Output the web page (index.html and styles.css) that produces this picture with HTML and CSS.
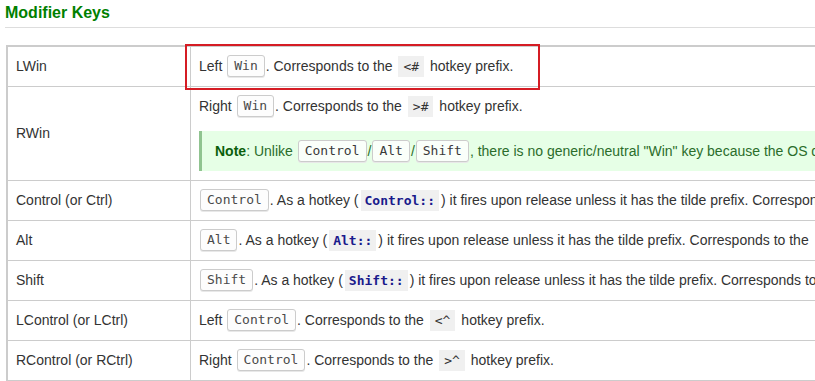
FILE: index.html
```html
<!DOCTYPE html>
<html lang="en">
<head>
<meta charset="utf-8">
<title>Modifier Keys</title>
<link rel="stylesheet" href="styles.css">
</head>
<body>
<div class="page">
  <h2 class="section-title">Modifier Keys</h2>
  <div class="table-wrap">
    <table class="keys">
      <tr>
        <td class="name">LWin</td>
        <td class="desc">Left <kbd>Win</kbd>. Corresponds to the <code>&lt;#</code> hotkey prefix.</td>
      </tr>
      <tr>
        <td class="name">RWin</td>
        <td class="desc">
          <p class="line">Right <kbd>Win</kbd>. Corresponds to the <code>&gt;#</code> hotkey prefix.</p>
          <div class="note"><strong>Note</strong>: Unlike <kbd>Control</kbd>/<kbd>Alt</kbd>/<kbd>Shift</kbd>, there is no generic/neutral "Win" key because the OS does not support it.</div>
        </td>
      </tr>
      <tr>
        <td class="name">Control (or Ctrl)</td>
        <td class="desc"><kbd>Control</kbd>. As a hotkey (<code class="hk">Control::</code>) it fires upon release unless it has the tilde prefix. Corresponds to the <code>^</code> hotkey prefix.</td>
      </tr>
      <tr>
        <td class="name">Alt</td>
        <td class="desc"><kbd>Alt</kbd>. As a hotkey (<code class="hk">Alt::</code>) it fires upon release unless it has the tilde prefix. Corresponds to the <code>!</code> hotkey prefix.</td>
      </tr>
      <tr>
        <td class="name">Shift</td>
        <td class="desc"><kbd>Shift</kbd>. As a hotkey (<code class="hk">Shift::</code>) it fires upon release unless it has the tilde prefix. Corresponds to the <code>+</code> hotkey prefix.</td>
      </tr>
      <tr>
        <td class="name">LControl (or LCtrl)</td>
        <td class="desc">Left <kbd>Control</kbd>. Corresponds to the <code>&lt;^</code> hotkey prefix.</td>
      </tr>
      <tr>
        <td class="name">RControl (or RCtrl)</td>
        <td class="desc">Right <kbd>Control</kbd>. Corresponds to the <code>&gt;^</code> hotkey prefix.</td>
      </tr>
    </table>
    <div class="highlight"></div>
  </div>
</div>
</body>
</html>
```
FILE: styles.css
```css
html, body {
  margin: 0;
  padding: 0;
  background: #fff;
  overflow: hidden;
}

body {
  font-family: "Liberation Sans", Arial, sans-serif;
  font-size: 14px;
  color: #333;
}

.page {
  width: 1200px;
  padding: 0 0 0 5px;
}

.section-title {
  margin: 0;
  padding: 3px 0 5px 0;
  font-size: 16px;
  line-height: 19px;
  font-weight: bold;
  color: #008000;
  border-bottom: 1px solid #ddd;
}

.table-wrap {
  position: relative;
  margin: 17px 0 0 1px;
}

.keys {
  border-collapse: collapse;
  width: 1150px;
  border: 2px solid #ccc;
  border-right: none;
  border-bottom: none;
}

.keys td {
  border: 1px solid #ccc;
  padding: 8px 8px 9px 8px;
  height: 22px;
  line-height: 22px;
  vertical-align: middle;
  white-space: nowrap;
}

.keys td.name {
  width: 166px;
}

.line {
  margin: 0;
  height: 22px;
}

kbd {
  display: inline-block;
  box-sizing: border-box;
  height: 22px;
  font-family: "DejaVu Sans Mono", "Liberation Mono", monospace;
  font-size: 13px;
  line-height: 20px;
  padding: 0 6px;
  margin: 0 1px;
  color: #4a4a4a;
  background: #fdfdfd;
  border: 1px solid #ccc;
  border-radius: 3px;
  box-shadow: 0 1px 0 #e8e8e8;
  vertical-align: top;
}

code {
  font-family: "DejaVu Sans Mono", "Liberation Mono", monospace;
  font-size: 13px;
  line-height: 14px;
  padding: 3px 5px;
  margin: 0 2px;
  background: #f0f0f0;
  color: #333;
}

code.hk {
  color: #1a1a8c;
  font-weight: bold;
  margin: 0 2px;
  padding: 3px 4px;
}

.note {
  margin-top: 14px;
  padding: 9px 12px 9px 13px;
  height: 22px;
  background: #e6ffe6;
  border-left: 3px solid #90c490;
  color: #2b6d2b;
  line-height: 22px;
}

.note strong {
  color: #0b5e0b;
}

.note kbd {
  color: #3a3a3a;
  background: #fafffa;
}

/* focus outline drawn around the first description cell */
.highlight {
  position: absolute;
  left: 179px;
  top: -1px;
  width: 351px;
  height: 42px;
  border: 2px solid #d51c24;
  pointer-events: none;
}
```
